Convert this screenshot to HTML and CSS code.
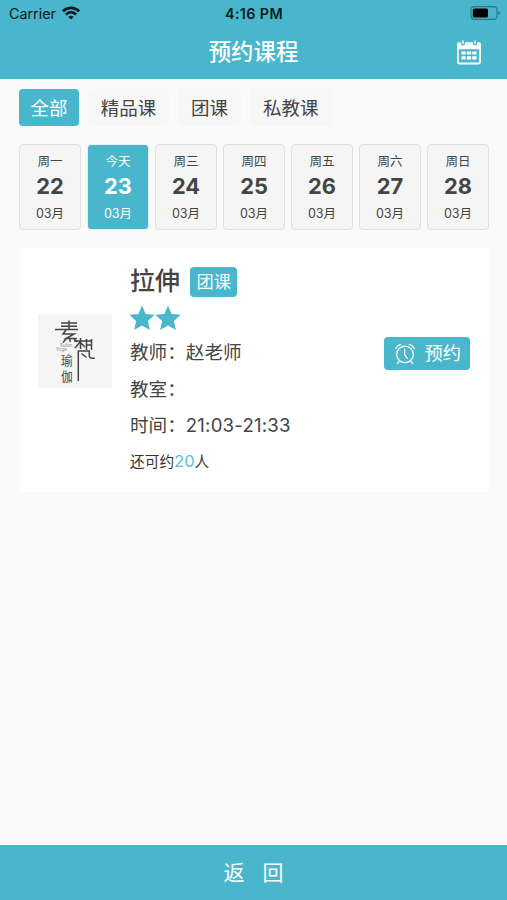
FILE: index.html
```
<!DOCTYPE html>
<html lang="zh-CN">
<head>
  <meta charset="UTF-8">
  <meta name="viewport" content="width=device-width, initial-scale=1.0">
  <title>预约课程</title>
  <link rel="stylesheet" href="styles.css">
</head>
<body>
  <header class="header">
    <div class="status-bar">
      <div class="carrier">
        <span>Carrier</span>
        <svg class="wifi" viewBox="0 0 18 14" fill="none" stroke="#071c20" stroke-width="2.7">
          <path d="M.9 5.2C5.6.7 12.4.7 17.1 5.2"/>
          <path d="M3.9 8.4c3-2.8 7.2-2.8 10.2 0"/>
          <path d="M9 13.6 6.3 10.7c1.6-1.4 3.8-1.4 5.4 0z" fill="#071c20" stroke="none"/>
        </svg>
      </div>
      <span class="time">4:16 PM</span>
      <svg class="battery" viewBox="0 0 31 14">
        <rect x="1" y=".7" width="26" height="12.6" rx="3.4" fill="none" stroke="#287987" stroke-width="1.2"/>
        <rect x="2.8" y="2.5" width="15.2" height="9" rx="1.6" fill="#000"/>
        <path d="M28.4 4.8c2 .8 2 3.6 0 4.4z" fill="#287987"/>
      </svg>
    </div>
    <div class="nav-bar">
      <h1>预约课程</h1>
      <svg class="calendar" viewBox="0 0 24 25">
        <path fill="#fff" fill-rule="evenodd" d="M2 2.2h1.8v1.3a2.1 2.1 0 0 0 4.2 0V2.2h8v1.3a2.1 2.1 0 0 0 4.2 0V2.2H22a2 2 0 0 1 2 2V22a2.4 2.4 0 0 1-2.4 2.4H2.4A2.4 2.4 0 0 1 0 22V4.2a2 2 0 0 1 2-2zM1.8 9.2v12.2q0 1.2 1.2 1.2h18q1.2 0 1.2-1.2V9.2z"/>
        <path stroke="#fff" stroke-width="1.5" stroke-linecap="round" d="M5.9.9v2.6M18.1.9v2.6"/>
        <path stroke="#fff" stroke-width="3.2" stroke-dasharray="4.2 1.2" d="M4.5 13h15M4.5 17.9h15"/>
      </svg>
    </div>
  </header>

  <main class="content">
    <nav class="tabs">
      <a class="tab active">全部</a>
      <a class="tab">精品课</a>
      <a class="tab">团课</a>
      <a class="tab">私教课</a>
    </nav>

    <div class="dates">
      <div class="date"><span>周一</span><strong>22</strong><span>03月</span></div>
      <div class="date active"><span>今天</span><strong>23</strong><span>03月</span></div>
      <div class="date"><span>周三</span><strong>24</strong><span>03月</span></div>
      <div class="date"><span>周四</span><strong>25</strong><span>03月</span></div>
      <div class="date"><span>周五</span><strong>26</strong><span>03月</span></div>
      <div class="date"><span>周六</span><strong>27</strong><span>03月</span></div>
      <div class="date"><span>周日</span><strong>28</strong><span>03月</span></div>
    </div>

    <section class="course">
      <svg class="logo" viewBox="0 0 74 74">
        <rect width="74" height="74" fill="#f5f5f5"/>
        <!-- 素 -->
        <path class="stroke" d="M23 9h16M23 12.2h16M17 15.6h23M31 6.500v9M28 16l-3 4h11l-8 4.500h11M32 24v4M28 25l-3 3.500M36 25l3 3"/>
        <!-- 梵, with the long tail on the left -->
        <path class="stroke" d="M36 27h18M42.500 24v11M42 28l-5 6M43 29l4 4M48.500 25v11M53.500 25v11M48 31h6M40.300 67V37h11v5.500q0 1.800 5.500 1.800M43.500 39.500l5 4"/>
        <text class="logo-en" x="22" y="32.500">Sufan</text>
        <text class="logo-en" x="18" y="36.500">Yoga</text>
        <text class="logo-cn" transform="translate(23 50.500) scale(.9 1)">瑜</text>
        <text class="logo-cn" transform="translate(23 67) scale(.9 1)">伽</text>
      </svg>
      <div class="info">
        <div class="title">
          <h2>拉伸</h2>
          <span class="tag">团课</span>
        </div>
        <div class="stars">
          <svg viewBox="0 0 26 26"><path d="M13 .6l3.6 8.3 9.1.9-6.8 6.1 2 9.1L13 20.4 5.1 25l2-9.1L.3 9.8l9.1-.9z"/></svg>
          <svg viewBox="0 0 26 26"><path d="M13 .6l3.6 8.3 9.1.9-6.8 6.1 2 9.1L13 20.4 5.1 25l2-9.1L.3 9.8l9.1-.9z"/></svg>
        </div>
        <p class="row">教师：赵老师</p>
        <p class="row">教室：</p>
        <p class="row">时间：<span class="hours">21:03-21:33</span></p>
        <p class="remain">还可约<em>20</em>人</p>
      </div>
      <button class="book">
        <svg viewBox="0 0 22 22" fill="none" stroke="#fff" stroke-width="1.2" stroke-linecap="round">
          <circle cx="11" cy="11.4" r="8.3"/>
          <path d="M10.7 6v5.7l2.6 3.600M5.200 18.200l-1.900 2.300M16.800 18.200l1.900 2.300M1.500 5.700C2.500 3.500 4.200 2 6.600 1.300M20.500 5.700c-1-2.200-2.700-3.700-5.100-4.400"/>
        </svg>
        预约
      </button>
    </section>
  </main>

  <footer class="footer"><span>返</span><span>回</span></footer>
</body>
</html>
```

FILE: styles.css
```
:root {
  --primary: #4ab6cc;
  --page-bg: #fafafa;
  --text: #444;
}
* { box-sizing: border-box; margin: 0; padding: 0; }
body {
  display: flex;
  flex-direction: column;
  height: 100vh;
  background: var(--page-bg);
  color: var(--text);
  font-family: Inter, "Noto Sans CJK SC", sans-serif;
}
svg { display: block; flex: none; }

.header {
  height: 79px;
  background: var(--primary);
}
.status-bar {
  display: grid;
  grid-template-columns: 1fr auto 1fr;
  align-items: center;
  height: 26px;
  padding: 0 6px 0 9px;
  color: #071c20;
  font-size: 14.3px;
}
.carrier {
  display: flex;
  align-items: center;
  gap: 6px;
}
.wifi { width: 18px; height: 14px; }
.time {
  font-weight: 600;
  letter-spacing: 0.4px;
  margin-left: -2px;
}
.battery {
  width: 31px;
  height: 14px;
  justify-self: end;
}
.nav-bar {
  display: grid;
  grid-template-columns: 1fr auto 1fr;
  align-items: center;
  height: 52px;
  padding: 0 26px;
}
.nav-bar h1 {
  grid-column: 2;
  color: #fff;
  font-size: 22.4px;
  font-weight: 500;
  line-height: 32px;
}
.calendar {
  width: 24px;
  height: 25px;
  justify-self: end;
}

.content {
  flex: 1;
  padding: 10px 18px 0 19px;
}
.tabs {
  display: flex;
  gap: 8.5px;
}
.tab {
  height: 37px;
  padding: 0 13.2px;
  border-radius: 4px;
  background: #f7f7f7;
  font-size: 18.5px;
  line-height: 38px;
}
.tab.active {
  padding: 0 11.5px;
  background: var(--primary);
  color: #fff;
}
.dates {
  display: grid;
  grid-template-columns: repeat(7, 1fr);
  gap: 6px;
  margin-top: 18px;
}
.date {
  display: flex;
  flex-direction: column;
  align-items: center;
  height: 86px;
  padding-top: 7px;
  border: 1px solid #dfdfdf;
  border-radius: 4px;
  background: #f5f5f5;
  font-size: 12.5px;
  line-height: 20px;
}
.date strong {
  margin: 1px 0 5px;
  font-size: 21.8px;
  font-weight: 700;
  line-height: 26px;
}
.date.active {
  border-color: #e4f2f5;
  background: var(--primary);
  color: #fff;
}

.course {
  display: flex;
  align-items: center;
  height: 244px;
  margin: 18px 0 0 1px;
  padding: 0 19px 0 18px;
  background: #fff;
}
.logo {
  width: 74px;
  height: 74px;
  margin-top: -38px;
}
.logo .stroke {
  fill: none;
  stroke: #444;
  stroke-width: 1.5;
}
.logo-cn { font-size: 13px; fill: #444; }
.logo-en { font-size: 4.5px; fill: #888; }
.info {
  flex: 1;
  align-self: flex-start;
  margin-left: 18px;
  padding-top: 18px;
}
.title {
  display: flex;
  align-items: center;
  gap: 10px;
  height: 31px;
}
.title h2 {
  font-size: 25px;
  font-weight: 500;
  line-height: 33px;
}
.tag {
  height: 30px;
  padding: 0 6.5px;
  border-radius: 4px;
  background: var(--primary);
  color: #fff;
  font-size: 17.2px;
  line-height: 30px;
}
.stars {
  display: flex;
  margin: 8px 0 3px -1px;
}
.stars svg {
  width: 26px;
  height: 26px;
  fill: var(--primary);
}
.row {
  height: 36.5px;
  font-size: 18.6px;
  line-height: 36px;
}
.hours { letter-spacing: 0.2px; }
.remain {
  color: #333;
  font-size: 14.7px;
  line-height: 35px;
}
.remain em {
  color: #5cbfd8;
  font-size: 16.5px;
  font-style: normal;
}
.book {
  display: flex;
  align-items: center;
  gap: 8px;
  height: 33px;
  margin-top: -33px;
  padding: 0 9px 0 10px;
  border: none;
  border-radius: 4px;
  background: var(--primary);
  color: #fff;
  font-family: inherit;
  font-size: 18.3px;
  line-height: 33px;
}
.book svg { width: 22px; height: 22px; }

.footer {
  display: flex;
  align-items: center;
  justify-content: center;
  gap: 18px;
  height: 55px;
  padding-bottom: 3px;
  background: var(--primary);
  color: #fff;
  font-size: 21px;
}
```
